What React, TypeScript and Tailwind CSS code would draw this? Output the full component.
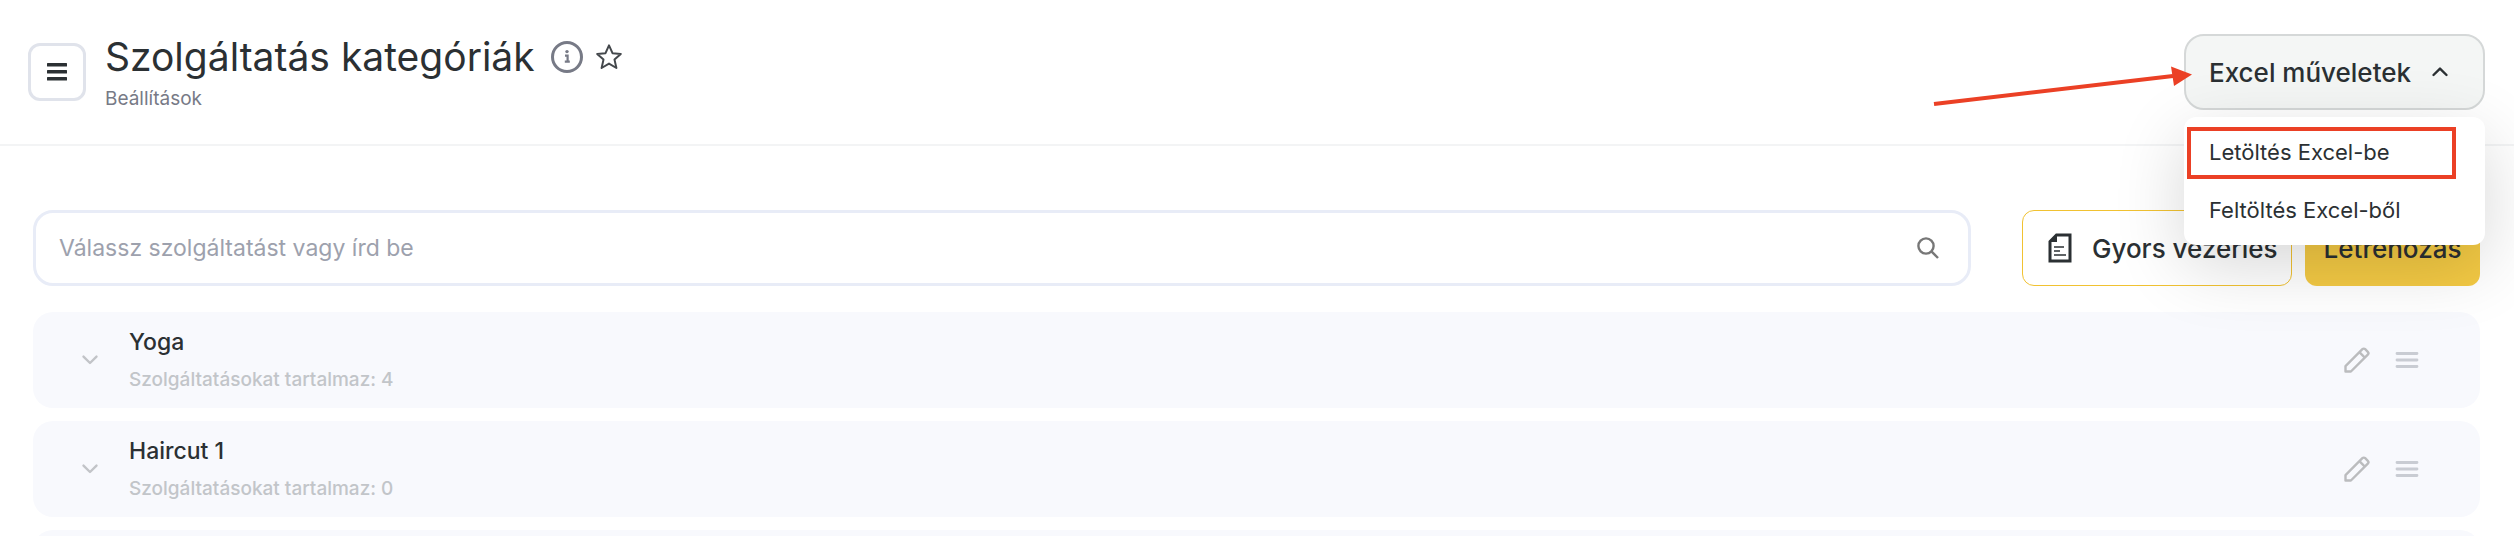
import React from "react";

const categories = [
  { name: "Yoga", count: 4 },
  { name: "Haircut 1", count: 0 },
];

function MenuIcon() {
  return (
    <svg width="20" height="18" viewBox="0 0 20 18" fill="#2b3033">
      <rect y="0" width="20" height="3.4" rx="0.5" />
      <rect y="7" width="20" height="3.4" rx="0.5" />
      <rect y="14" width="20" height="3.4" rx="0.5" />
    </svg>
  );
}

function InfoIcon() {
  return (
    <svg width="32" height="32" viewBox="0 0 32 32" fill="none">
      <circle cx="16" cy="16" r="14.5" stroke="#777a86" strokeWidth="3" />
      <circle cx="16" cy="10.6" r="1.7" fill="#777a86" />
      <path d="M14 14.6h2.6v6M13.8 20.6h5" stroke="#777a86" strokeWidth="2.2" />
    </svg>
  );
}

function StarIcon() {
  return (
    <svg width="28" height="28" viewBox="0 0 28 28" fill="none">
      <path
        d="M14 2.4l3.5 7.8 8.3.8-6.3 5.6 1.9 8.4L14 20.6 6.6 25l1.9-8.4L2.2 11l8.3-.8z"
        stroke="#44484c"
        strokeWidth="2"
        strokeLinejoin="round"
      />
    </svg>
  );
}

function SearchIcon() {
  return (
    <svg width="22" height="22" viewBox="0 0 22 22" fill="none" stroke="#777" strokeWidth="2.4">
      <circle cx="9" cy="9" r="7.6" />
      <path d="M14.2 14.2l6.8 6.8" />
    </svg>
  );
}

function DocumentIcon() {
  return (
    <svg width="24" height="30" viewBox="0 0 24 30" fill="none">
      <path d="M8.5 2H22v26H2V8.5z" stroke="#2b3033" strokeWidth="3" />
      <path d="M9 1v8H1z" fill="#2b3033" />
      <path d="M6 14h10M6 18h6M6 22h12" stroke="#2b3033" strokeWidth="1.6" />
    </svg>
  );
}

function PencilIcon() {
  return (
    <svg
      width="26"
      height="26"
      viewBox="0 0 26 26"
      fill="none"
      stroke="#bbbcbe"
      strokeWidth="2.4"
      strokeLinejoin="round"
    >
      <path d="M1.5 24.5v-5.4L18.4 2.2c.8-.8 2-.8 2.8 0l2.6 2.6c.8.8.8 2 0 2.8L6.9 24.5z" />
      <path d="M15.4 5.2l5.4 5.4" />
    </svg>
  );
}

function DragIcon() {
  return (
    <svg
      width="24"
      height="18"
      viewBox="0 0 24 18"
      fill="none"
      stroke="#c9ccd3"
      strokeWidth="2.8"
      strokeLinecap="round"
    >
      <path d="M2 2.5h20M2 9h20M2 15.5h20" />
    </svg>
  );
}

function Chevron({ up = false, color }: { up?: boolean; color: string }) {
  return (
    <svg
      width="18"
      height="12"
      viewBox="0 0 18 12"
      fill="none"
      stroke={color}
      strokeWidth="2.4"
      strokeLinecap="round"
      strokeLinejoin="round"
    >
      <path d={up ? "M2.5 9l6.5-6.4L15.5 9" : "M2.5 2.6L9 9l6.5-6.4"} />
    </svg>
  );
}

function ExcelMenu() {
  return (
    <div className="relative z-10">
      <button className="flex h-[76px] w-[301px] items-center justify-between rounded-[20px] border-2 border-[#d5d8d8] bg-[#f4f6f5] pr-[34px] pl-[23px] text-[26px] font-medium">
        Excel műveletek
        <Chevron up color="#2b3033" />
      </button>
      <ul className="absolute top-full left-0 mt-[7px] w-full rounded-xl bg-white py-[6px] text-[22px] shadow-[0_20px_70px_rgba(0,0,0,0.16)]">
        <li className="relative">
          <button className="block h-[58px] w-full px-[25px] text-left">Letöltés Excel-be</button>
          <span className="pointer-events-none absolute top-1 right-[29px] left-[3px] h-[52px] border-4 border-[#eb4025]" />
        </li>
        <li>
          <button className="block h-[58px] w-full px-[25px] text-left">Feltöltés Excel-ből</button>
        </li>
      </ul>
      <svg
        className="pointer-events-none absolute top-8 right-[293px]"
        width="259"
        height="42"
        viewBox="0 0 259 42"
        fill="#eb4025"
      >
        <path d="M1 38L240 10" stroke="#eb4025" strokeWidth="4" />
        <path d="M238 0.5L259 8.5 241 20z" />
      </svg>
    </div>
  );
}

function CategoryRow({ name, count }: { name: string; count: number }) {
  return (
    <li className="flex h-24 items-center rounded-[20px] bg-[#f8f9fd] pr-[61px] pl-12">
      <button aria-label="Lenyitás">
        <Chevron color="#c2c4c8" />
      </button>
      <div className="ml-[30px] flex-1">
        <div className="text-[23px] leading-8 font-medium">{name}</div>
        <div className="mt-2 text-[19px] leading-7 font-medium text-[#c2c5c9]">
          Szolgáltatásokat tartalmaz: {count}
        </div>
      </div>
      <div className="flex items-center gap-[25px]">
        <button aria-label="Szerkesztés">
          <PencilIcon />
        </button>
        <button aria-label="Áthelyezés">
          <DragIcon />
        </button>
      </div>
    </li>
  );
}

function App() {
  return (
    <div className="h-screen overflow-hidden bg-white font-[Inter,'Liberation_Sans',sans-serif] text-[#2b3033]">
      <header className="flex h-[146px] items-start justify-between border-b-2 border-[#f3f4f5] pt-[34px] pr-[29px] pl-7">
        <div className="flex">
          <button
            aria-label="Menü"
            className="mt-[9px] flex size-[58px] items-center justify-center rounded-xl border-3 border-[#e0e3eb]"
          >
            <MenuIcon />
          </button>
          <div className="ml-[19px]">
            <div className="flex items-center">
              <h1 className="text-[39px] leading-[46px]">Szolgáltatás kategóriák</h1>
              <button aria-label="Információ" className="ml-4">
                <InfoIcon />
              </button>
              <button aria-label="Kedvenc" className="ml-3">
                <StarIcon />
              </button>
            </div>
            <p className="mt-[5px] text-[19px] leading-7 text-[#777a86]">Beállítások</p>
          </div>
        </div>
        <ExcelMenu />
      </header>

      <main className="pt-16 pr-[34px] pl-[33px]">
        <div className="flex">
          <label className="flex h-[76px] flex-1 items-center rounded-[20px] border-3 border-[#e8ecf7] pr-[29px] pl-[23px]">
            <input
              type="text"
              aria-label="Szolgáltatás keresése"
              placeholder="Válassz szolgáltatást vagy írd be"
              className="flex-1 text-[23px] outline-none placeholder:text-[#9da1ad]"
            />
            <SearchIcon />
          </label>
          <button className="ml-[51px] flex h-[76px] w-[270px] items-center gap-5 rounded-xl border border-[#f1c232] pl-[25px] text-[26px] font-medium">
            <DocumentIcon />
            Gyors vezérlés
          </button>
          <button className="ml-[13px] h-[76px] w-[175px] rounded-xl bg-[#f4ca44] text-[26px] font-medium">
            Létrehozás
          </button>
        </div>

        <ul className="mt-[26px] flex flex-col gap-[13px]">
          {categories.map((category) => (
            <CategoryRow key={category.name} {...category} />
          ))}
          <li className="h-24 rounded-[20px] bg-[#f8f9fd]" />
        </ul>
      </main>
    </div>
  );
}

export default App;
